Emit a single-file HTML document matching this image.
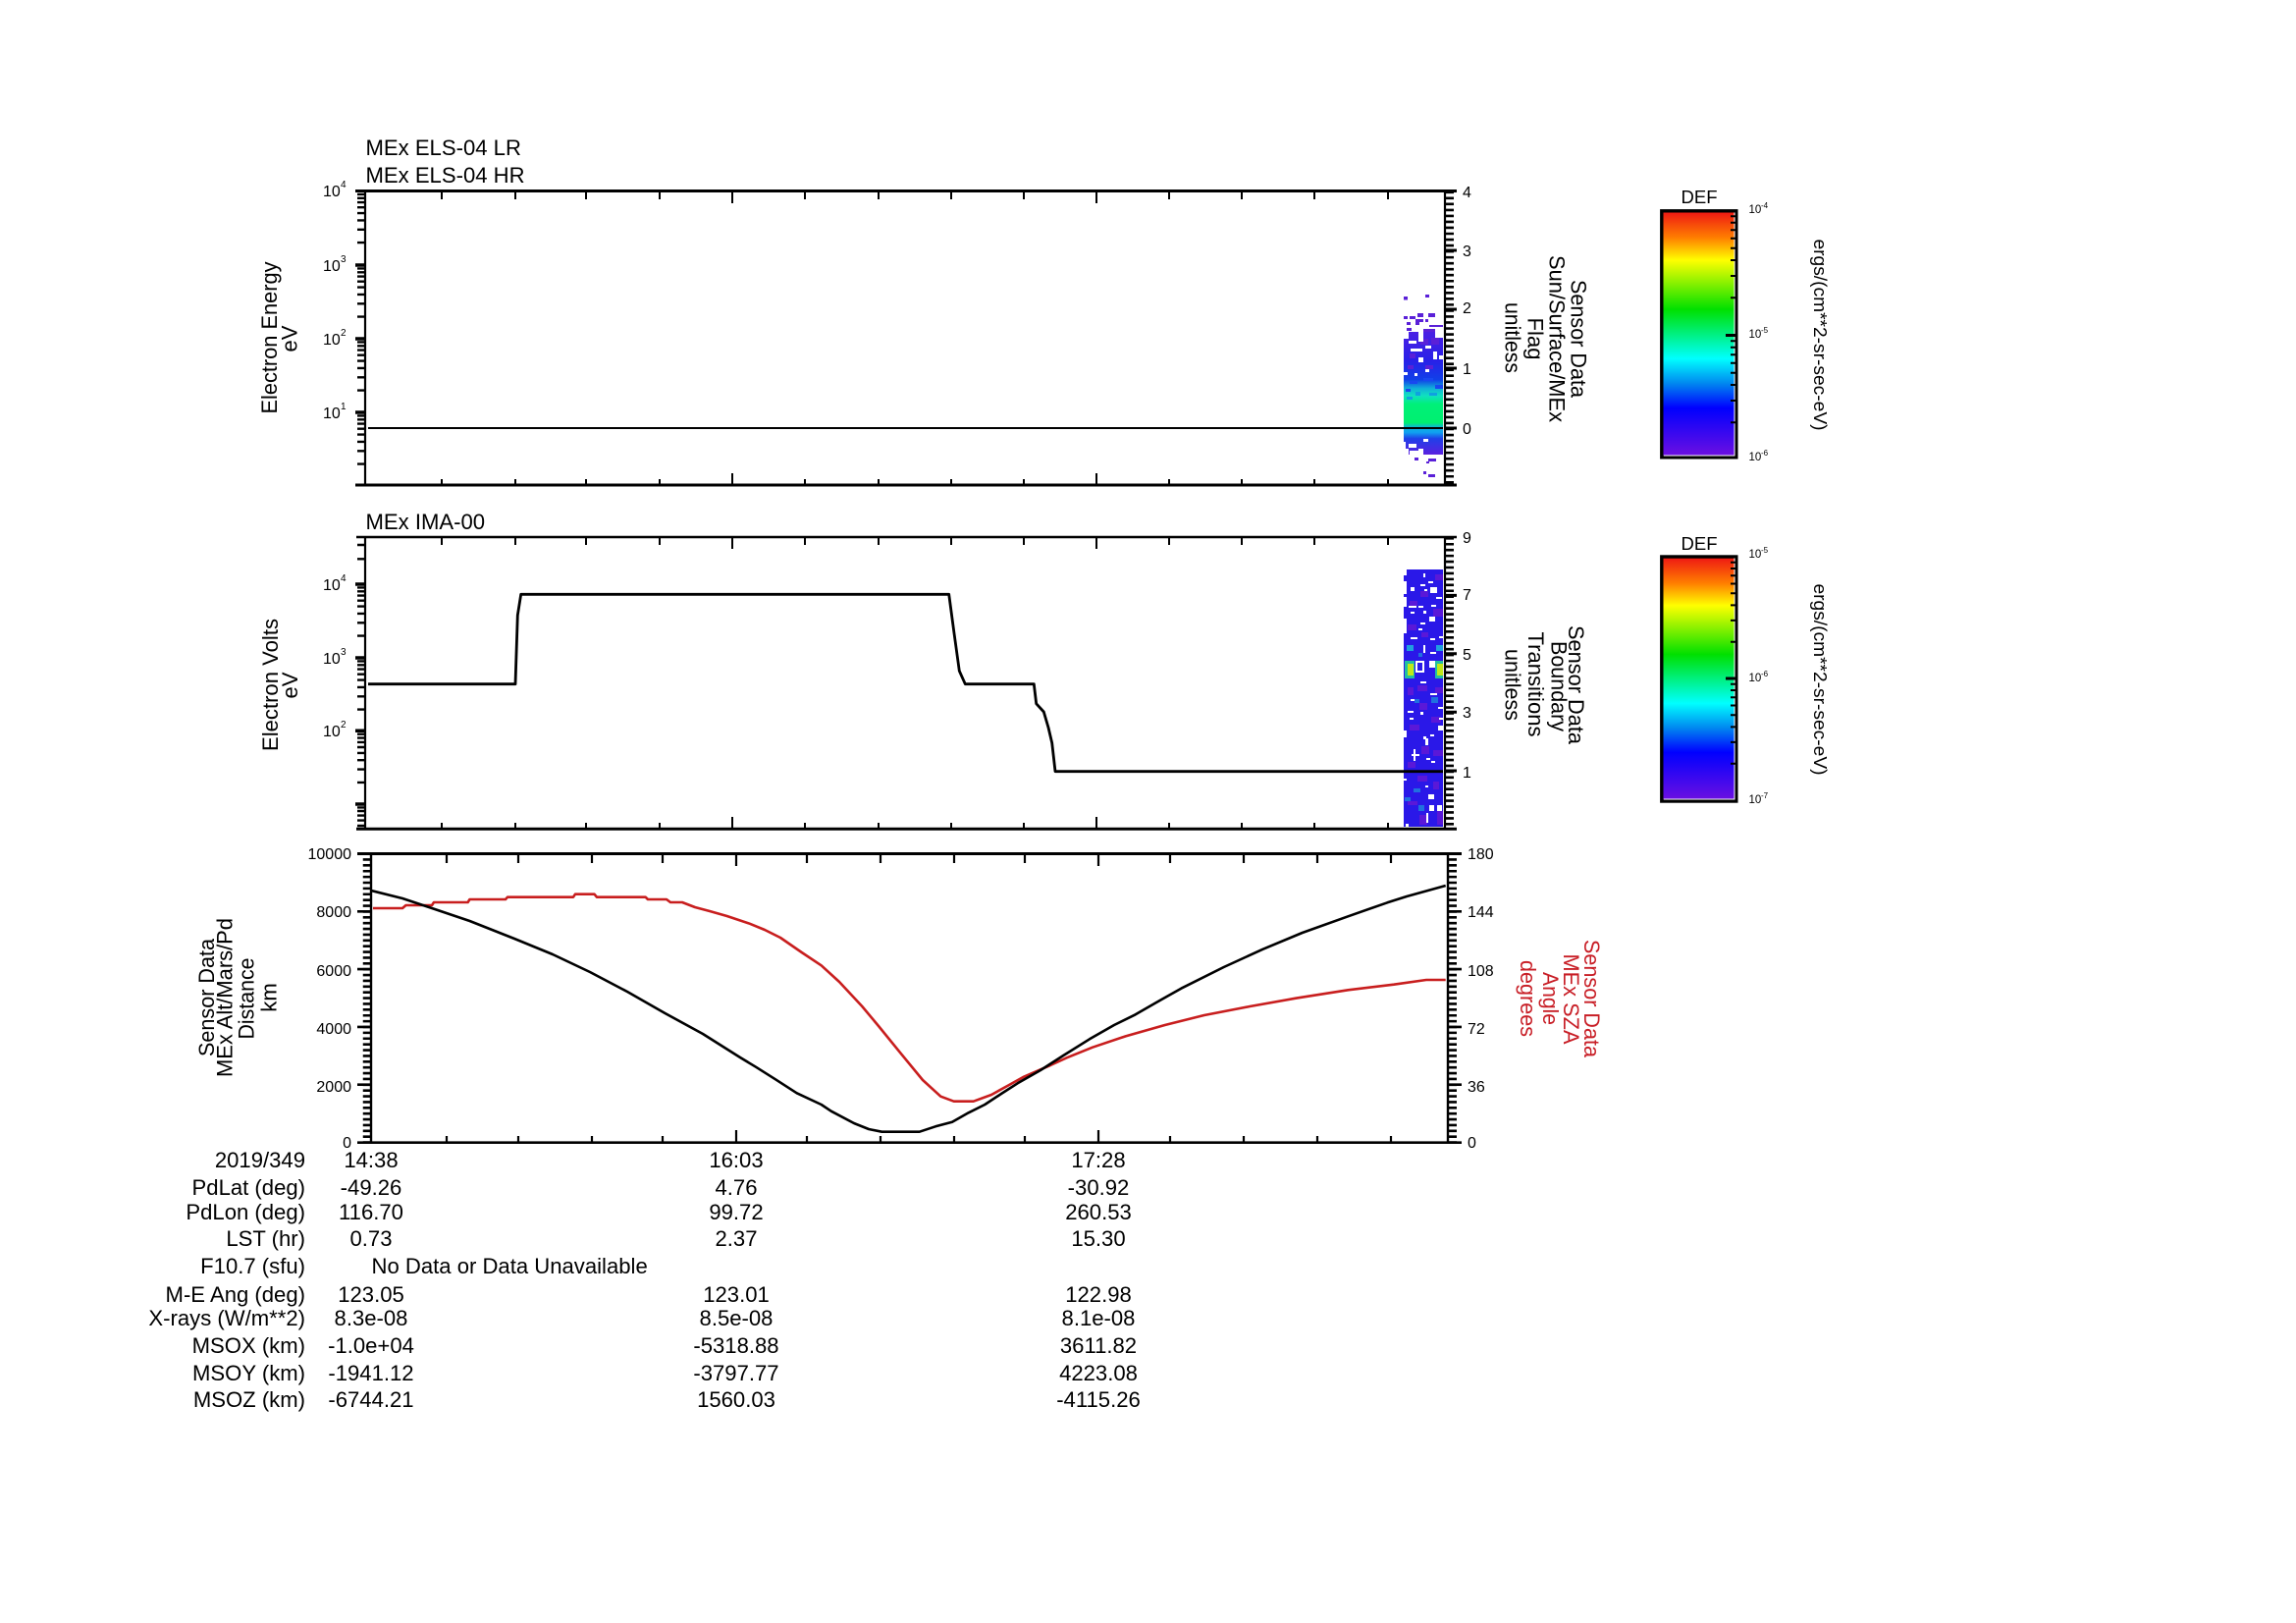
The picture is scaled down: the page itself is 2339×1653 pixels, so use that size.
<!DOCTYPE html>
<html>
<head>
<meta charset="utf-8">
<title>MEx plot</title>
<style>
html,body{margin:0;padding:0;background:#fff;width:2339px;height:1653px;overflow:hidden}
svg{display:block}
text{font-family:"Liberation Sans",sans-serif;fill:#000}
.t{font-size:22.1px}
.c{text-anchor:middle}
.e{text-anchor:end}
.n{font-size:16px}
.s{font-size:10px}
.r{fill:#c81e26}
</style>
</head>
<body>
<svg width="2339" height="1653" viewBox="0 0 2339 1653" xmlns="http://www.w3.org/2000/svg">
<defs>
<linearGradient id="rb" x1="0" y1="0" x2="0" y2="1">
<stop offset="0" stop-color="#ee1414"/>
<stop offset=".11" stop-color="#ff8000"/>
<stop offset=".2" stop-color="#ffff00"/>
<stop offset=".4" stop-color="#00e000"/>
<stop offset=".5" stop-color="#00f080"/>
<stop offset=".6" stop-color="#00ffff"/>
<stop offset=".7" stop-color="#0088f0"/>
<stop offset=".8" stop-color="#0000ff"/>
<stop offset="1" stop-color="#7010e0"/>
</linearGradient>
<linearGradient id="hm1" gradientUnits="userSpaceOnUse" x1="0" y1="338" x2="0" y2="463">
<stop offset="0" stop-color="#4a20e4"/>
<stop offset=".23" stop-color="#2a20e8"/>
<stop offset=".39" stop-color="#1040e8"/>
<stop offset=".46" stop-color="#10b0d8"/>
<stop offset=".52" stop-color="#10e0c0"/>
<stop offset=".59" stop-color="#00f078"/>
<stop offset=".74" stop-color="#00f070"/>
<stop offset=".78" stop-color="#10b0e0"/>
<stop offset=".82" stop-color="#10a0f0"/>
<stop offset=".87" stop-color="#2040e8"/>
<stop offset="1" stop-color="#5a20e0"/>
</linearGradient>
<path id="dec" d="M0 3.4H8M0 7.3H8M0 11.6H8M0 16.7H8M0 22.6H8M0 29.9H8M0 39.3H8M0 52.6H8" stroke="#000" stroke-width="2.4" fill="none"/>
<path id="cdec1" d="M0 5.8H6M0 12.3H6M0 19.7H6M0 28.2H6M0 38.2H6M0 50.5H6M0 66.5H6M0 88.8H6" stroke="#000" stroke-width="2" fill="none"/>
<path id="cdec2" d="M0 5.7H6M0 12H6M0 19.2H6M0 27.5H6M0 37.3H6M0 49.4H6M0 64.9H6M0 86.7H6" stroke="#000" stroke-width="2" fill="none"/>
</defs>

<rect width="2339" height="1653" fill="#fff"/>

<!-- ===== Panel 1 ===== -->
<rect x="1430" y="338" width="40" height="125" fill="url(#hm1)"/>
<g fill="#5a20d8">
<rect x="1447" y="345" width="8" height="6"/><rect x="1458" y="344" width="8" height="7"/><rect x="1436" y="360" width="6" height="5"/>
<rect x="1430" y="302" width="4" height="3.5"/><rect x="1452" y="300" width="4" height="3"/><rect x="1430" y="322" width="4" height="3"/>
<rect x="1436" y="322" width="6" height="3"/><rect x="1444" y="319" width="6" height="4"/><rect x="1455" y="319" width="7" height="4"/>
<rect x="1442" y="325" width="8" height="3"/><rect x="1433" y="328" width="4" height="3"/><rect x="1442" y="328" width="4" height="3"/>
<rect x="1452" y="325" width="3" height="3"/><rect x="1456" y="331" width="14" height="2"/><rect x="1433" y="334" width="5" height="3"/>
<rect x="1450" y="335" width="12" height="3"/><rect x="1441" y="466" width="4" height="3"/><rect x="1455" y="467" width="8" height="3"/>
<rect x="1453" y="470" width="3" height="2"/><rect x="1450" y="480" width="3" height="3"/><rect x="1455" y="483" width="7" height="3"/>
<rect x="1452" y="372" width="8" height="4"/><rect x="1434" y="372" width="6" height="4"/>
</g>
<g fill="#1848f0">
<rect x="1436" y="388" width="8" height="3"/><rect x="1450" y="385" width="10" height="3"/><rect x="1462" y="392" width="8" height="4"/>
<rect x="1432" y="396" width="5" height="3"/>
</g>
<g fill="#10a0e0">
<rect x="1442" y="399" width="5" height="4"/><rect x="1456" y="400" width="8" height="3"/><rect x="1433" y="404" width="6" height="3"/>
</g>
<g fill="#fff">
<rect x="1430" y="338" width="5" height="7"/><rect x="1445" y="338" width="5" height="10"/><rect x="1462" y="338" width="8" height="6"/>
<rect x="1435" y="347" width="8" height="3"/><rect x="1437" y="355" width="12" height="3"/><rect x="1452" y="352" width="6" height="3"/>
<rect x="1445" y="364" width="5" height="5"/><rect x="1460" y="358" width="4" height="8"/><rect x="1466" y="362" width="4" height="4"/>
<rect x="1430" y="379" width="4" height="3"/><rect x="1441" y="380" width="3" height="3"/><rect x="1452" y="376" width="4" height="3"/>
<rect x="1435" y="452" width="8" height="4"/><rect x="1430" y="450" width="2" height="13"/><rect x="1430" y="457" width="5" height="6"/>
<rect x="1450" y="447" width="5" height="3"/><rect x="1445" y="457" width="5" height="6"/><rect x="1436" y="459" width="9" height="4"/>
</g>
<path d="M375 436H1470" stroke="#000" stroke-width="2" fill="none"/>
<path d="M362 194.5H1484M362 494H1484" stroke="#000" stroke-width="3" fill="none"/>
<path d="M372 194V495M1472 194V495" stroke="#000" stroke-width="2.2" fill="none"/>
<path d="M450 195V203M525 195V203M597 195V203M672 195V203M746 195V207M820 195V203M895 195V203M969 195V203M1043 195V203M1117 195V207M1191 195V203M1265 195V203M1339 195V203M1414 195V203
M450 494V488M525 494V488M597 494V488M672 494V488M746 494V482M820 494V488M895 494V488M969 494V488M1043 494V488M1117 494V482M1191 494V488M1265 494V488M1339 494V488M1414 494V488" stroke="#000" stroke-width="2" fill="none"/>
<use href="#dec" x="364" y="194.5"/><use href="#dec" x="364" y="270"/><use href="#dec" x="364" y="345"/><use href="#dec" x="364" y="420"/>
<path d="M362 270H372M362 345H372M362 420H372" stroke="#000" stroke-width="3.5" fill="none"/>
<path d="M1476.5 194.5V494" stroke="#000" stroke-width="9" stroke-dasharray="2.6 3.43" fill="none"/>
<path d="M1472 255H1484M1472 315H1484M1472 375H1484M1472 436H1484" stroke="#000" stroke-width="3" fill="none"/>

<text class="t" x="372.5" y="158">MEx ELS-04 LR</text>
<text class="t" x="372.5" y="186">MEx ELS-04 HR</text>
<text class="n" x="329" y="200">10</text><text class="s" x="347" y="191">4</text>
<text class="n" x="329" y="276">10</text><text class="s" x="347" y="267">3</text>
<text class="n" x="329" y="351">10</text><text class="s" x="347" y="342">2</text>
<text class="n" x="329" y="426">10</text><text class="s" x="347" y="417">1</text>
<text class="n" x="1490" y="201">4</text>
<text class="n" x="1490" y="261">3</text>
<text class="n" x="1490" y="319">2</text>
<text class="n" x="1490" y="381">1</text>
<text class="n" x="1490" y="442">0</text>
<text class="t c" transform="translate(282,344) rotate(-90)" textLength="155" lengthAdjust="spacingAndGlyphs">Electron Energy</text>
<text class="t c" transform="translate(302.7,345) rotate(-90)">eV</text>
<text class="t c" transform="translate(1600.5,345) rotate(90)" textLength="120" lengthAdjust="spacingAndGlyphs">Sensor Data</text>
<text class="t c" transform="translate(1578.5,345) rotate(90)" textLength="170" lengthAdjust="spacingAndGlyphs">Sun/Surface/MEx</text>
<text class="t c" transform="translate(1556.5,345) rotate(90)">Flag</text>
<text class="t c" transform="translate(1533.5,344) rotate(90)" textLength="72" lengthAdjust="spacingAndGlyphs">unitless</text>

<!-- ===== Panel 2 ===== -->
<rect x="1430" y="580" width="40" height="262" fill="#2a18e8"/>
<g fill="#5a18d8">
<rect x="1447" y="602" width="8" height="6"/><rect x="1436" y="612" width="8" height="5"/><rect x="1460" y="620" width="10" height="8"/>
<rect x="1434" y="636" width="9" height="6"/><rect x="1448" y="644" width="7" height="5"/><rect x="1462" y="585" width="8" height="6"/>
<rect x="1444" y="698" width="10" height="6"/><rect x="1434" y="700" width="6" height="8"/><rect x="1462" y="700" width="8" height="6"/>
<rect x="1446" y="716" width="8" height="7"/><rect x="1458" y="730" width="10" height="6"/><rect x="1436" y="738" width="10" height="6"/>
<rect x="1448" y="760" width="8" height="8"/><rect x="1460" y="764" width="10" height="6"/><rect x="1434" y="776" width="8" height="6"/>
<rect x="1444" y="790" width="10" height="6"/><rect x="1460" y="796" width="6" height="8"/><rect x="1434" y="816" width="10" height="4"/>
<rect x="1446" y="830" width="8" height="10"/><rect x="1464" y="826" width="6" height="14"/>
</g>
<g fill="#2070e0">
<rect x="1431" y="812" width="6" height="4"/><rect x="1445" y="820" width="6" height="6"/><rect x="1440" y="803" width="7" height="4"/>
<rect x="1458" y="710" width="7" height="6"/><rect x="1441" y="712" width="5" height="4"/><rect x="1445" y="665" width="4" height="4"/>
</g>
<g fill="#20a0e0">
<rect x="1433" y="657" width="7" height="6"/><rect x="1463" y="657" width="7" height="6"/>
</g>
<rect x="1431" y="673" width="10" height="18" fill="#20c0a0"/>
<rect x="1462" y="673" width="8" height="18" fill="#20c0a0"/>
<rect x="1434" y="676" width="6" height="12" fill="#c0e818"/>
<rect x="1464" y="676" width="6" height="12" fill="#c0e818"/>
<g fill="#fff">
<rect x="1430" y="580" width="3" height="6"/><rect x="1430" y="592" width="3" height="13"/><rect x="1450" y="584" width="2" height="4"/>
<rect x="1437" y="598" width="4" height="4"/><rect x="1447" y="595" width="5" height="2"/><rect x="1455" y="592" width="5" height="2"/>
<rect x="1457" y="598" width="7" height="6"/><rect x="1451" y="600" width="3" height="2"/><rect x="1463" y="608" width="6" height="2"/>
<rect x="1430" y="608" width="3" height="10"/><rect x="1435" y="617" width="8" height="2"/><rect x="1445" y="617" width="5" height="2"/>
<rect x="1458" y="616" width="5" height="2"/><rect x="1437" y="623" width="4" height="2"/><rect x="1450" y="622" width="3" height="3"/>
<rect x="1456" y="628" width="6" height="5"/><rect x="1447" y="634" width="5" height="2"/><rect x="1445" y="640" width="4" height="2"/>
<rect x="1430" y="630" width="3" height="15"/><rect x="1437" y="649" width="7" height="2"/><rect x="1457" y="650" width="5" height="2"/>
<rect x="1466" y="648" width="4" height="2"/><rect x="1450" y="657" width="2" height="8"/><rect x="1457" y="664" width="6" height="2"/>
<rect x="1442" y="673" width="9" height="2"/><rect x="1442" y="683" width="9" height="2"/><rect x="1442" y="673" width="2" height="12"/><rect x="1449" y="673" width="2" height="12"/>
<rect x="1456" y="673" width="6" height="7"/><rect x="1447" y="694" width="6" height="2"/><rect x="1457" y="706" width="7" height="2"/>
<rect x="1437" y="712" width="4" height="2"/><rect x="1434" y="724" width="6" height="2"/><rect x="1447" y="725" width="3" height="3"/>
<rect x="1465" y="720" width="5" height="2"/><rect x="1436" y="731" width="4" height="2"/><rect x="1466" y="731" width="4" height="2"/>
<rect x="1465" y="739" width="5" height="5"/><rect x="1430" y="744" width="3" height="7"/><rect x="1450" y="750" width="3" height="3"/>
<rect x="1457" y="748" width="4" height="2"/><rect x="1452" y="752" width="3" height="7"/><rect x="1438" y="768" width="8" height="2"/>
<rect x="1440" y="763" width="2" height="12"/><rect x="1453" y="772" width="4" height="2"/><rect x="1458" y="775" width="4" height="2"/>
<rect x="1430" y="793" width="3" height="2"/><rect x="1452" y="800" width="3" height="2"/><rect x="1455" y="809" width="6" height="5"/>
<rect x="1456" y="820" width="5" height="6"/><rect x="1464" y="820" width="5" height="6"/><rect x="1453" y="828" width="2" height="10"/>
<rect x="1432" y="839" width="3" height="3"/>
</g>
<path d="M375 696.7H525L527.3 626.7L530.7 605.3H966.7L972 645L977.3 683.3L983.3 696.7H1053.3L1055.7 716.7L1063.3 725L1068 741L1071.7 756.7L1075 785.7H1470" stroke="#000" stroke-width="2.8" fill="none" stroke-linejoin="round"/>
<path d="M363 547H1484" stroke="#000" stroke-width="2.4" fill="none"/>
<path d="M363 844.3H1484" stroke="#000" stroke-width="3" fill="none"/>
<path d="M372 546V845M1472 546V845" stroke="#000" stroke-width="2.2" fill="none"/>
<path d="M450 547V555M525 547V555M597 547V555M672 547V555M746 547V559M820 547V555M895 547V555M969 547V555M1043 547V555M1117 547V559M1191 547V555M1265 547V555M1339 547V555M1414 547V555
M450 844V838M525 844V838M597 844V838M672 844V838M746 844V832M820 844V838M895 844V838M969 844V838M1043 844V838M1117 844V832M1191 844V838M1265 844V838M1339 844V838M1414 844V838" stroke="#000" stroke-width="2" fill="none"/>
<path d="M364 555H372M364 569.3H372" stroke="#000" stroke-width="2.4" fill="none"/>
<use href="#dec" x="364" y="595"/><use href="#dec" x="364" y="670"/><use href="#dec" x="364" y="744.3"/>
<path d="M364 822.4H372M364 826H372M364 830.6H372M364 835.6H372M364 841H372" stroke="#000" stroke-width="2.4" fill="none"/>
<path d="M362 595H372M362 670H372M362 744.3H372M362 819H372" stroke="#000" stroke-width="3.5" fill="none"/>
<path d="M1476.5 547V844" stroke="#000" stroke-width="9" stroke-dasharray="2.6 3.34" fill="none"/>
<path d="M1472 606.4H1484M1472 665.8H1484M1472 725.2H1484M1472 785H1484" stroke="#000" stroke-width="3" fill="none"/>

<text class="t" x="372.5" y="539">MEx IMA-00</text>
<text class="n" x="329" y="601">10</text><text class="s" x="347" y="592">4</text>
<text class="n" x="329" y="676">10</text><text class="s" x="347" y="667">3</text>
<text class="n" x="329" y="750">10</text><text class="s" x="347" y="741">2</text>
<text class="n" x="1490" y="553">9</text>
<text class="n" x="1490" y="611">7</text>
<text class="n" x="1490" y="672">5</text>
<text class="n" x="1490" y="731">3</text>
<text class="n" x="1490" y="792">1</text>
<text class="t c" transform="translate(283,697.5) rotate(-90)" textLength="135" lengthAdjust="spacingAndGlyphs">Electron Volts</text>
<text class="t c" transform="translate(303,698) rotate(-90)">eV</text>
<text class="t c" transform="translate(1598.2,697.5) rotate(90)" textLength="121" lengthAdjust="spacingAndGlyphs">Sensor Data</text>
<text class="t c" transform="translate(1580.5,699) rotate(90)" textLength="92" lengthAdjust="spacingAndGlyphs">Boundary</text>
<text class="t c" transform="translate(1557.2,697) rotate(90)" textLength="107" lengthAdjust="spacingAndGlyphs">Transitions</text>
<text class="t c" transform="translate(1533.5,697.5) rotate(90)" textLength="73" lengthAdjust="spacingAndGlyphs">unitless</text>

<!-- ===== Panel 3 ===== -->
<path d="M380 925H410L413.5 922H440L442 919H476.6L478.5 916H515L517 913.7H584L586 910.7H605.5L608 913.7H657.6L660 916H679L683 919H695L708 924L723 928L740.6 933L763.6 940.7L779 947L795 955L816.7 970L836.7 983.3L855 1000L878.3 1025L895 1045L916.7 1071.7L940 1100L958.3 1116.7L971.7 1121.7H991.7L1010 1115L1026.7 1105.7L1043 1096.7L1070 1085L1086.7 1077.3L1113 1066.7L1146.7 1055.4L1186.7 1044L1226.7 1034L1273.3 1025L1320 1016.7L1373.3 1008.3L1420 1002.7L1453 998H1472.7" stroke="#c81e1e" stroke-width="2.6" fill="none" stroke-linejoin="round"/>
<path d="M378 907L410 915L440 925L478.5 938L524 956L563 972L601 990L639 1010L677.5 1032L716 1053L754 1077L770 1086.7L790 1099.3L811.7 1113.3L836.7 1125L846.7 1131.7L870 1144L885 1150L898.3 1152.7H936.7L953 1147.3L970 1142.7L986.7 1133.3L1003.3 1125L1020 1114L1036.7 1103.3L1060 1090L1083.3 1075L1110 1058.3L1135 1044L1156.7 1033.3L1176.7 1021.7L1203.3 1006.7L1246.7 985L1286.7 966.7L1326.7 950L1373.3 933.3L1413.3 919.3L1433 913L1472.7 902" stroke="#000" stroke-width="2.6" fill="none" stroke-linejoin="round"/>
<path d="M364 869.5H1489" stroke="#000" stroke-width="3" fill="none"/>
<path d="M364 1163.7H1489" stroke="#000" stroke-width="2.6" fill="none"/>
<path d="M378 869V1165M1475 869V1165" stroke="#000" stroke-width="2.4" fill="none"/>
<path d="M455 870V879M528 870V879M603 870V879M675 870V879M750 870V882M822 870V879M897 870V879M972 870V879M1044 870V879M1119 870V882M1192 870V879M1267 870V879M1342 870V879M1417 870V879
M455 1163V1157M528 1163V1157M603 1163V1157M675 1163V1157M750 1163V1151M822 1163V1157M897 1163V1157M972 1163V1157M1044 1163V1157M1119 1163V1151M1192 1163V1157M1267 1163V1157M1342 1163V1157M1417 1163V1157" stroke="#000" stroke-width="2.2" fill="none"/>
<path d="M374 868.3V1164" stroke="#000" stroke-width="8.5" stroke-dasharray="2.6 3.28" fill="none"/>
<path d="M1479.5 868.3V1164" stroke="#000" stroke-width="9" stroke-dasharray="2.6 3.28" fill="none"/>
<path d="M364 928.3H378M364 987.1H378M364 1045.9H378M364 1104.7H378M1475 928.3H1489M1475 987.1H1489M1475 1045.9H1489M1475 1104.7H1489" stroke="#000" stroke-width="2.6" fill="none"/>

<text class="n e" x="358" y="875">10000</text>
<text class="n e" x="358" y="934">8000</text>
<text class="n e" x="358" y="994">6000</text>
<text class="n e" x="358" y="1053">4000</text>
<text class="n e" x="358" y="1112">2000</text>
<text class="n e" x="358" y="1169">0</text>
<text class="n" x="1495" y="875">180</text>
<text class="n" x="1495" y="934">144</text>
<text class="n" x="1495" y="994">108</text>
<text class="n" x="1495" y="1053">72</text>
<text class="n" x="1495" y="1112">36</text>
<text class="n" x="1495" y="1169">0</text>
<text class="t c" transform="translate(218,1016) rotate(-90)" textLength="120" lengthAdjust="spacingAndGlyphs">Sensor Data</text>
<text class="t c" transform="translate(236.6,1016) rotate(-90)" textLength="162" lengthAdjust="spacingAndGlyphs">MEx Alt/Mars/Pd</text>
<text class="t c" transform="translate(258.5,1017) rotate(-90)" textLength="83" lengthAdjust="spacingAndGlyphs">Distance</text>
<text class="t c" transform="translate(281.4,1016) rotate(-90)">km</text>
<text class="t c r" transform="translate(1614.2,1017) rotate(90)" textLength="120" lengthAdjust="spacingAndGlyphs">Sensor Data</text>
<text class="t c r" transform="translate(1592.9,1017.5) rotate(90)" textLength="92" lengthAdjust="spacingAndGlyphs">MEx SZA</text>
<text class="t c r" transform="translate(1571.9,1017) rotate(90)" textLength="54" lengthAdjust="spacingAndGlyphs">Angle</text>
<text class="t c r" transform="translate(1549.2,1017) rotate(90)" textLength="78" lengthAdjust="spacingAndGlyphs">degrees</text>

<!-- ===== Colour bars ===== -->
<text x="1731" y="207" class="c" style="font-size:18.5px">DEF</text>
<rect x="1692.8" y="214.8" width="76" height="251" fill="url(#rb)" stroke="#000" stroke-width="3.4"/>
<path d="M1767 216.5V464H1694.8" stroke="#fff" stroke-width="1" fill="none"/>
<use href="#cdec1" x="1763" y="214.5"/><use href="#cdec1" x="1763" y="341.5"/>
<path d="M1758 341.5H1769" stroke="#000" stroke-width="3" fill="none"/>
<text x="1781.5" y="217" style="font-size:11.5px">10</text><text x="1794" y="212" style="font-size:8px">-4</text>
<text x="1781.5" y="344" style="font-size:11.5px">10</text><text x="1794" y="339" style="font-size:8px">-5</text>
<text x="1781.5" y="469" style="font-size:11.5px">10</text><text x="1794" y="464" style="font-size:8px">-6</text>
<text transform="translate(1848,341) rotate(90)" class="c" style="font-size:18px" textLength="195" lengthAdjust="spacingAndGlyphs">ergs/(cm**2-sr-sec-eV)</text>

<text x="1731" y="560" class="c" style="font-size:18.5px">DEF</text>
<rect x="1692.8" y="567" width="76" height="249" fill="url(#rb)" stroke="#000" stroke-width="3.4"/>
<path d="M1767 568.5V814H1694.8" stroke="#fff" stroke-width="1" fill="none"/>
<use href="#cdec2" x="1763" y="567"/><use href="#cdec2" x="1763" y="691"/>
<path d="M1758 691H1769" stroke="#000" stroke-width="3" fill="none"/>
<text x="1781.5" y="568" style="font-size:11.5px">10</text><text x="1794" y="563" style="font-size:8px">-5</text>
<text x="1781.5" y="694" style="font-size:11.5px">10</text><text x="1794" y="689" style="font-size:8px">-6</text>
<text x="1781.5" y="818" style="font-size:11.5px">10</text><text x="1794" y="813" style="font-size:8px">-7</text>
<text transform="translate(1848,692) rotate(90)" class="c" style="font-size:18px" textLength="195" lengthAdjust="spacingAndGlyphs">ergs/(cm**2-sr-sec-eV)</text>

<!-- ===== Table ===== -->
<g>
<text class="t e" x="311" y="1189">2019/349</text>
<text class="t e" x="311" y="1217">PdLat (deg)</text>
<text class="t e" x="311" y="1242">PdLon (deg)</text>
<text class="t e" x="311" y="1269">LST (hr)</text>
<text class="t e" x="311" y="1297">F10.7 (sfu)</text>
<text class="t e" x="311" y="1326">M-E Ang (deg)</text>
<text class="t e" x="311" y="1350">X-rays (W/m**2)</text>
<text class="t e" x="311" y="1378">MSOX (km)</text>
<text class="t e" x="311" y="1406">MSOY (km)</text>
<text class="t e" x="311" y="1433">MSOZ (km)</text>

<text class="t c" x="378" y="1189">14:38</text>
<text class="t c" x="378" y="1217">-49.26</text>
<text class="t c" x="378" y="1242">116.70</text>
<text class="t c" x="378" y="1269">0.73</text>
<text class="t" x="378.5" y="1297">No Data or Data Unavailable</text>
<text class="t c" x="378" y="1326">123.05</text>
<text class="t c" x="378" y="1350">8.3e-08</text>
<text class="t c" x="378" y="1378">-1.0e+04</text>
<text class="t c" x="378" y="1406">-1941.12</text>
<text class="t c" x="378" y="1433">-6744.21</text>

<text class="t c" x="750" y="1189">16:03</text>
<text class="t c" x="750" y="1217">4.76</text>
<text class="t c" x="750" y="1242">99.72</text>
<text class="t c" x="750" y="1269">2.37</text>
<text class="t c" x="750" y="1326">123.01</text>
<text class="t c" x="750" y="1350">8.5e-08</text>
<text class="t c" x="750" y="1378">-5318.88</text>
<text class="t c" x="750" y="1406">-3797.77</text>
<text class="t c" x="750" y="1433">1560.03</text>

<text class="t c" x="1119" y="1189">17:28</text>
<text class="t c" x="1119" y="1217">-30.92</text>
<text class="t c" x="1119" y="1242">260.53</text>
<text class="t c" x="1119" y="1269">15.30</text>
<text class="t c" x="1119" y="1326">122.98</text>
<text class="t c" x="1119" y="1350">8.1e-08</text>
<text class="t c" x="1119" y="1378">3611.82</text>
<text class="t c" x="1119" y="1406">4223.08</text>
<text class="t c" x="1119" y="1433">-4115.26</text>
</g>
</svg>
</body>
</html>
